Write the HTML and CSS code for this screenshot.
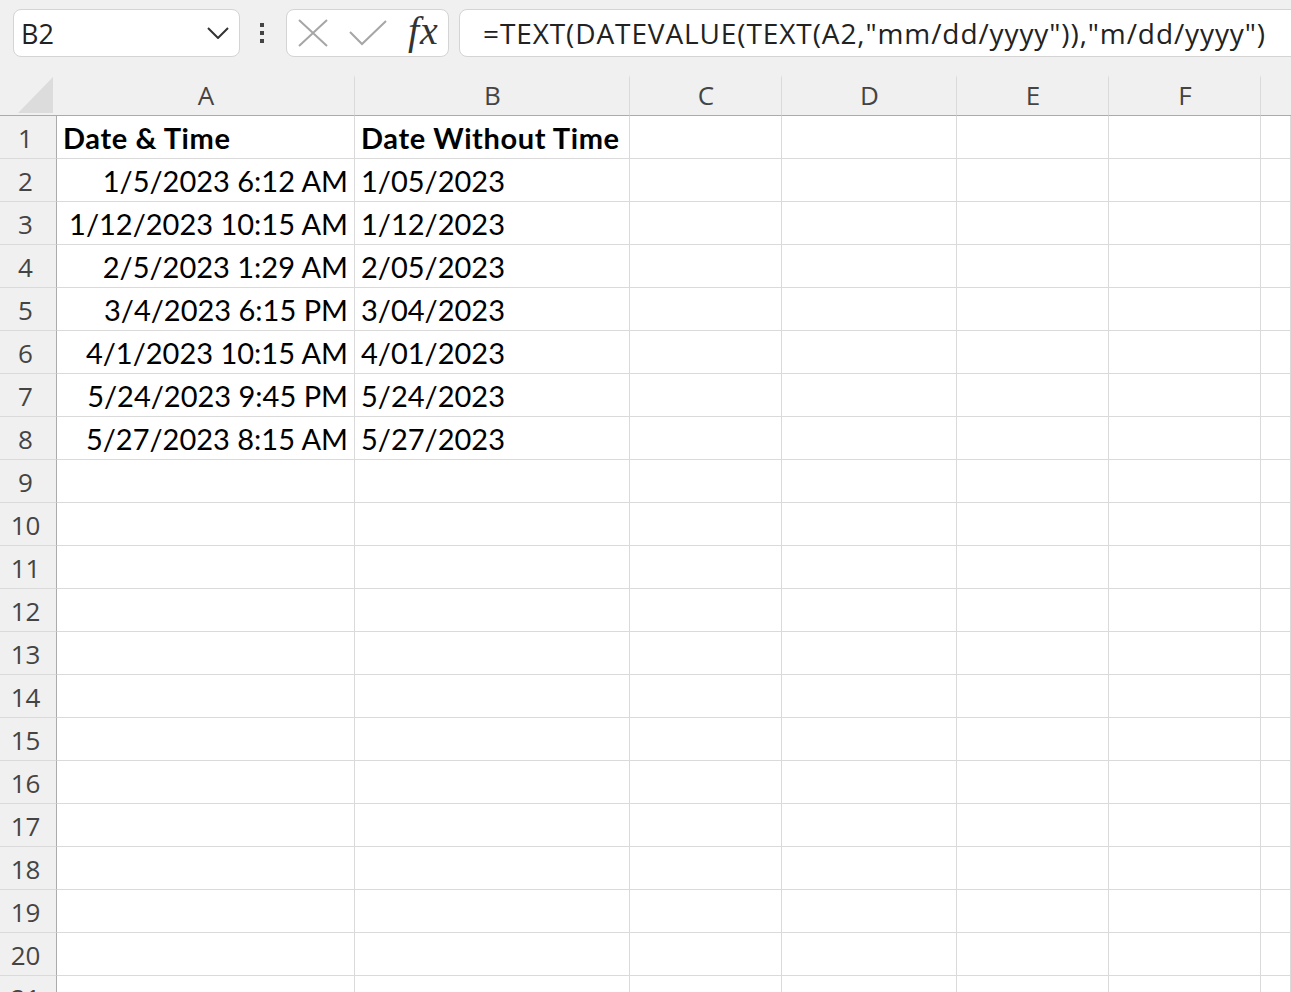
FILE: index.html
```html
<!DOCTYPE html>
<html>
<head>
  <title>Book1 - Excel</title>
  <link rel="stylesheet" href="styles.css">
</head>
<body>
  <div class="toolbar">
    <div class="namebox">
      <span class="cellref">B2</span>
      <svg class="chevron" width="22" height="12" viewBox="0 0 22 12">
        <path d="M1 1 L11 11 L21 1" fill="none" stroke="#333" stroke-width="2"/>
      </svg>
    </div>
    <div class="dots"><span></span><span></span><span></span></div>
    <div class="fxbox">
      <svg width="30" height="28" viewBox="0 0 30 28">
        <path d="M1 1 L29 27 M29 1 L1 27" stroke="#a6a6a6" stroke-width="2" fill="none"/>
      </svg>
      <svg width="38" height="26" viewBox="0 0 38 26">
        <path d="M1 12 L13 24 L37 1" stroke="#a6a6a6" stroke-width="2" fill="none"/>
      </svg>
      <span class="fx">fx</span>
    </div>
    <div class="formula">=TEXT(DATEVALUE(TEXT(A2,"mm/dd/yyyy")),"m/dd/yyyy")</div>
  </div>

  <div class="sheet">
    <div class="corner"><div class="triangle"></div></div>
    <div class="colhead">A</div>
    <div class="colhead">B</div>
    <div class="colhead">C</div>
    <div class="colhead">D</div>
    <div class="colhead">E</div>
    <div class="colhead">F</div>
    <div class="colhead"></div>
  </div>

  <script>
    // build the rows of the sheet
    var data = [
      ['Date & Time', 'Date Without Time'],
      ['1/5/2023 6:12 AM', '1/05/2023'],
      ['1/12/2023 10:15 AM', '1/12/2023'],
      ['2/5/2023 1:29 AM', '2/05/2023'],
      ['3/4/2023 6:15 PM', '3/04/2023'],
      ['4/1/2023 10:15 AM', '4/01/2023'],
      ['5/24/2023 9:45 PM', '5/24/2023'],
      ['5/27/2023 8:15 AM', '5/27/2023']
    ];
    var sheet = document.querySelector('.sheet');
    for (var r = 1; r <= 21; r++) {
      var head = document.createElement('div');
      head.className = 'rowhead';
      head.textContent = r;
      sheet.appendChild(head);
      for (var c = 0; c < 7; c++) {
        var cell = document.createElement('div');
        cell.className = 'cell';
        var row = data[r - 1];
        if (row && c < 2) {
          cell.textContent = row[c];
          if (r === 1) cell.classList.add('bold');
          else if (c === 0) cell.classList.add('right');
        }
        sheet.appendChild(cell);
      }
    }
  </script>
</body>
</html>
```

FILE: styles.css
```css
/* spreadsheet window */
body {
  margin: 0;
  padding: 0;
  background-color: #f0f0f0;
  font-family: Lato, "Open Sans", sans-serif;
  overflow: hidden;
  height: 992px;
}

.toolbar {
  display: flex;
  align-items: center;
  height: 75px;
  padding: 0 0 9px 13px;
  box-sizing: border-box;
  background-color: #f0f0f0;
}

.namebox {
  display: flex;
  align-items: center;
  justify-content: space-between;
  width: 227px;
  height: 48px;
  box-sizing: border-box;
  padding: 0 10px 0 7px;
  background-color: #fff;
  border: 1px solid #d4d4d4;
  border-radius: 8px;
}

.cellref {
  font-family: "Open Sans", sans-serif;
  font-size: 27px;
  color: #222;
}

.dots {
  display: flex;
  flex-direction: column;
  gap: 4px;
  margin: 0 22px 0 20px;
}

.dots span {
  display: block;
  width: 4px;
  height: 4px;
  background-color: #444;
}

.fxbox {
  display: flex;
  align-items: center;
  gap: 21px;
  width: 163px;
  height: 48px;
  box-sizing: border-box;
  padding: 0 8px 0 11px;
  background-color: #fff;
  border: 1px solid #d4d4d4;
  border-radius: 8px;
}

.fx {
  font-family: "Liberation Serif", serif;
  font-style: italic;
  font-size: 40px;
  color: #333;
  line-height: 1;
  margin-top: -4px;
  letter-spacing: 1px;
}

.formula {
  flex: 1;
  margin-left: 10px;
  margin-right: -20px;
  height: 48px;
  box-sizing: border-box;
  padding-left: 23px;
  display: flex;
  align-items: center;
  background-color: #fff;
  border: 1px solid #d4d4d4;
  border-radius: 8px;
  font-family: "Open Sans", sans-serif;
  font-size: 28px;
  letter-spacing: 0.9px;
  color: #222;
  white-space: nowrap;
}

.sheet {
  display: grid;
  grid-template-columns: 57px 298px 275px 152px 175px 152px 152px 1fr;
  grid-template-rows: 41px;
  grid-auto-rows: 43px;
}

.corner,
.colhead {
  background-color: #f0f0f0;
  border-bottom: 1px solid #ababab;
  box-sizing: border-box;
}

.corner {
  position: relative;
}

.triangle {
  position: absolute;
  left: 18px;
  top: 2px;
  width: 35px;
  height: 36px;
  background-color: #dcdcdc;
  clip-path: polygon(100% 0, 100% 100%, 0 100%);
}

.colhead {
  display: flex;
  align-items: flex-end;
  justify-content: center;
  padding-bottom: 2px;
  font-family: "Open Sans", sans-serif;
  font-size: 26px;
  color: #444;
  border-left: 1px solid #dadada;
  border-top: 3px solid #f0f0f0;
  margin-left: -1px;
}

.rowhead {
  background-color: #f0f0f0;
  border-right: 1px solid #ababab;
  border-bottom: 1px solid #dadada;
  box-sizing: border-box;
  display: flex;
  align-items: flex-end;
  justify-content: center;
  padding: 0 5px 2px 0;
  font-family: "Open Sans", sans-serif;
  font-size: 26px;
  color: #444;
}

.cell {
  background-color: #fff;
  border-right: 1px solid #dadada;
  border-bottom: 1px solid #dadada;
  box-sizing: border-box;
  padding: 0 6px 3px 6px;
  display: flex;
  align-items: flex-end;
  font-size: 29px;
  color: #000;
  white-space: nowrap;
}

.cell.bold {
  font-weight: bold;
  letter-spacing: 0.6px;
}

.cell.right {
  justify-content: flex-end;
}
```
